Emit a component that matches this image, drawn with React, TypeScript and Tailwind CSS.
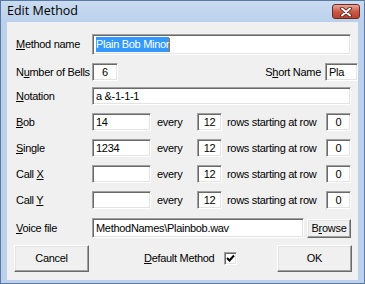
import React from "react";

const sunken =
  "box-border border border-t-[#a0a0a0] border-l-[#a0a0a0] border-b-white border-r-white bg-white shadow-[inset_1px_1px_0_#696969,inset_-1px_-1px_0_#e3e3e3]";
const raised =
  "box-border border border-t-white border-l-white border-b-[#696969] border-r-[#696969] bg-[#f0f0f0] shadow-[inset_-1px_-1px_0_#a0a0a0,inset_1px_1px_0_#e3e3e3]";

function Label({ pre = "", u, post = "" }: { pre?: string; u: string; post?: string }) {
  return (
    <span className="whitespace-nowrap">
      {pre}
      <span className="underline underline-offset-[1px]">{u}</span>
      {post}
    </span>
  );
}

function Box({ w, value, center }: { w: string; value?: string; center?: boolean }) {
  return (
    <div className={`${sunken} ${w} h-full flex items-center ${center ? "justify-center" : "pl-[3px]"}`}>
      {value}
    </div>
  );
}

const calls = [
  { pre: "", u: "B", post: "ob", value: "14" },
  { pre: "", u: "S", post: "ingle", value: "1234" },
  { pre: "Call ", u: "X", post: "", value: "" },
  { pre: "Call ", u: "Y", post: "", value: "" },
];

export default function App() {
  return (
    <div className="w-[365px] h-[284px] box-border border border-[#5b7aa3] bg-[#bcd2ec] flex flex-col font-['Liberation_Sans',Arial,sans-serif] text-[11px] tracking-[-0.3px] text-black leading-none">
      {/* title bar */}
      <div className="h-[21px] shrink-0 flex items-start justify-between pl-[6px] pr-[4px] bg-gradient-to-b from-[#c9dbf1] to-[#bad0ea]">
        <span className="mt-[4px] text-[12.5px] tracking-normal font-['Open_Sans',sans-serif] text-black">Edit Method</span>
        <div className="mt-[3px] w-[28px] h-[15px] rounded-[3px] border border-[#6e2a22] bg-gradient-to-b from-[#e6a79c] via-[#c95a48] to-[#b9412f] flex items-center justify-center">
          <svg width="14" height="10" viewBox="0 0 14 10">
            <path d="M3 1.5 L11 8.5 M11 1.5 L3 8.5" stroke="#4a1810" strokeWidth="3.6" strokeLinecap="round" />
            <path d="M3 1.5 L11 8.5 M11 1.5 L3 8.5" stroke="#ffffff" strokeWidth="2" strokeLinecap="round" />
          </svg>
        </div>
      </div>

      {/* client area */}
      <div className="flex-1 mx-[6px] mb-[3px] bg-[#f0f0f0] flex flex-col">
        {/* method name */}
        <div className="mt-[12px] h-[21px] flex items-center pl-[9px]">
          <div className="w-[76px]">
            <Label u="M" post="ethod name" />
          </div>
          <div className={`${sunken} w-[259px] h-full flex items-center pl-[3px]`}>
            <span className="bg-[#3399ff] text-white py-[2px]">Plain Bob Minor</span>
            <span className="w-px h-[14px] bg-[#c86a10]" />
          </div>
        </div>

        {/* number of bells / short name */}
        <div className="mt-[8px] h-[18px] flex items-center pl-[9px]">
          <div className="w-[76px]">
            <Label pre="N" u="u" post="mber of Bells" />
          </div>
          <Box w="w-[26px]" value="6" center />
          <div className="flex-1" />
          <span className="mr-[4px]">
            <Label pre="S" u="h" post="ort Name" />
          </span>
          <Box w="w-[33px]" value="Pla" />
        </div>

        {/* notation */}
        <div className="mt-[6px] h-[18px] flex items-center pl-[9px]">
          <div className="w-[76px]">
            <Label u="N" post="otation" />
          </div>
          <Box w="w-[259px]" value="a &-1-1-1" />
        </div>

        {calls.map((c) => (
          <div key={c.u} className="mt-[8px] h-[18px] flex items-center pl-[9px]">
            <div className="w-[76px]">
              <Label pre={c.pre} u={c.u} post={c.post} />
            </div>
            <Box w="w-[59px]" value={c.value} />
            <span className="w-[46px] pl-[6px]">every</span>
            <Box w="w-[25px]" value="12" center />
            <span className="w-[104px] pl-[5px] whitespace-nowrap">rows starting at row</span>
            <Box w="w-[25px]" value="0" center />
          </div>
        ))}

        {/* voice file */}
        <div className="mt-[9px] h-[20px] flex items-center pl-[9px]">
          <div className="w-[76px]">
            <Label u="V" post="oice file" />
          </div>
          <Box w="w-[212px]" value="MethodNames\Plainbob.wav" />
          <div className={`${raised} ml-[3px] w-[44px] h-[19px] flex items-center justify-center`}>
            <Label pre="B" u="r" post="owse" />
          </div>
        </div>

        {/* buttons */}
        <div className="mt-[7px] h-[27px] flex items-center pl-[7px]">
          <div className={`${raised} w-[75px] h-full flex items-center justify-center`}>Cancel</div>
          <span className="ml-[55px] w-[80px]">
            <Label u="D" post="efault Method" />
          </span>
          <div className="w-[13px] h-[13px] box-border border border-t-[#a0a0a0] border-l-[#a0a0a0] border-b-white border-r-white bg-white shadow-[inset_1px_1px_0_#696969,inset_-1px_-1px_0_#e3e3e3] flex items-center justify-center">
            <svg width="9" height="9" viewBox="0 0 9 9">
              <path d="M1 4 L3.5 6.5 L8 1.5" stroke="#000" strokeWidth="2" fill="none" />
            </svg>
          </div>
          <div className={`${raised} ml-[40px] w-[75px] h-full flex items-center justify-center`}>OK</div>
        </div>
      </div>
    </div>
  );
}
